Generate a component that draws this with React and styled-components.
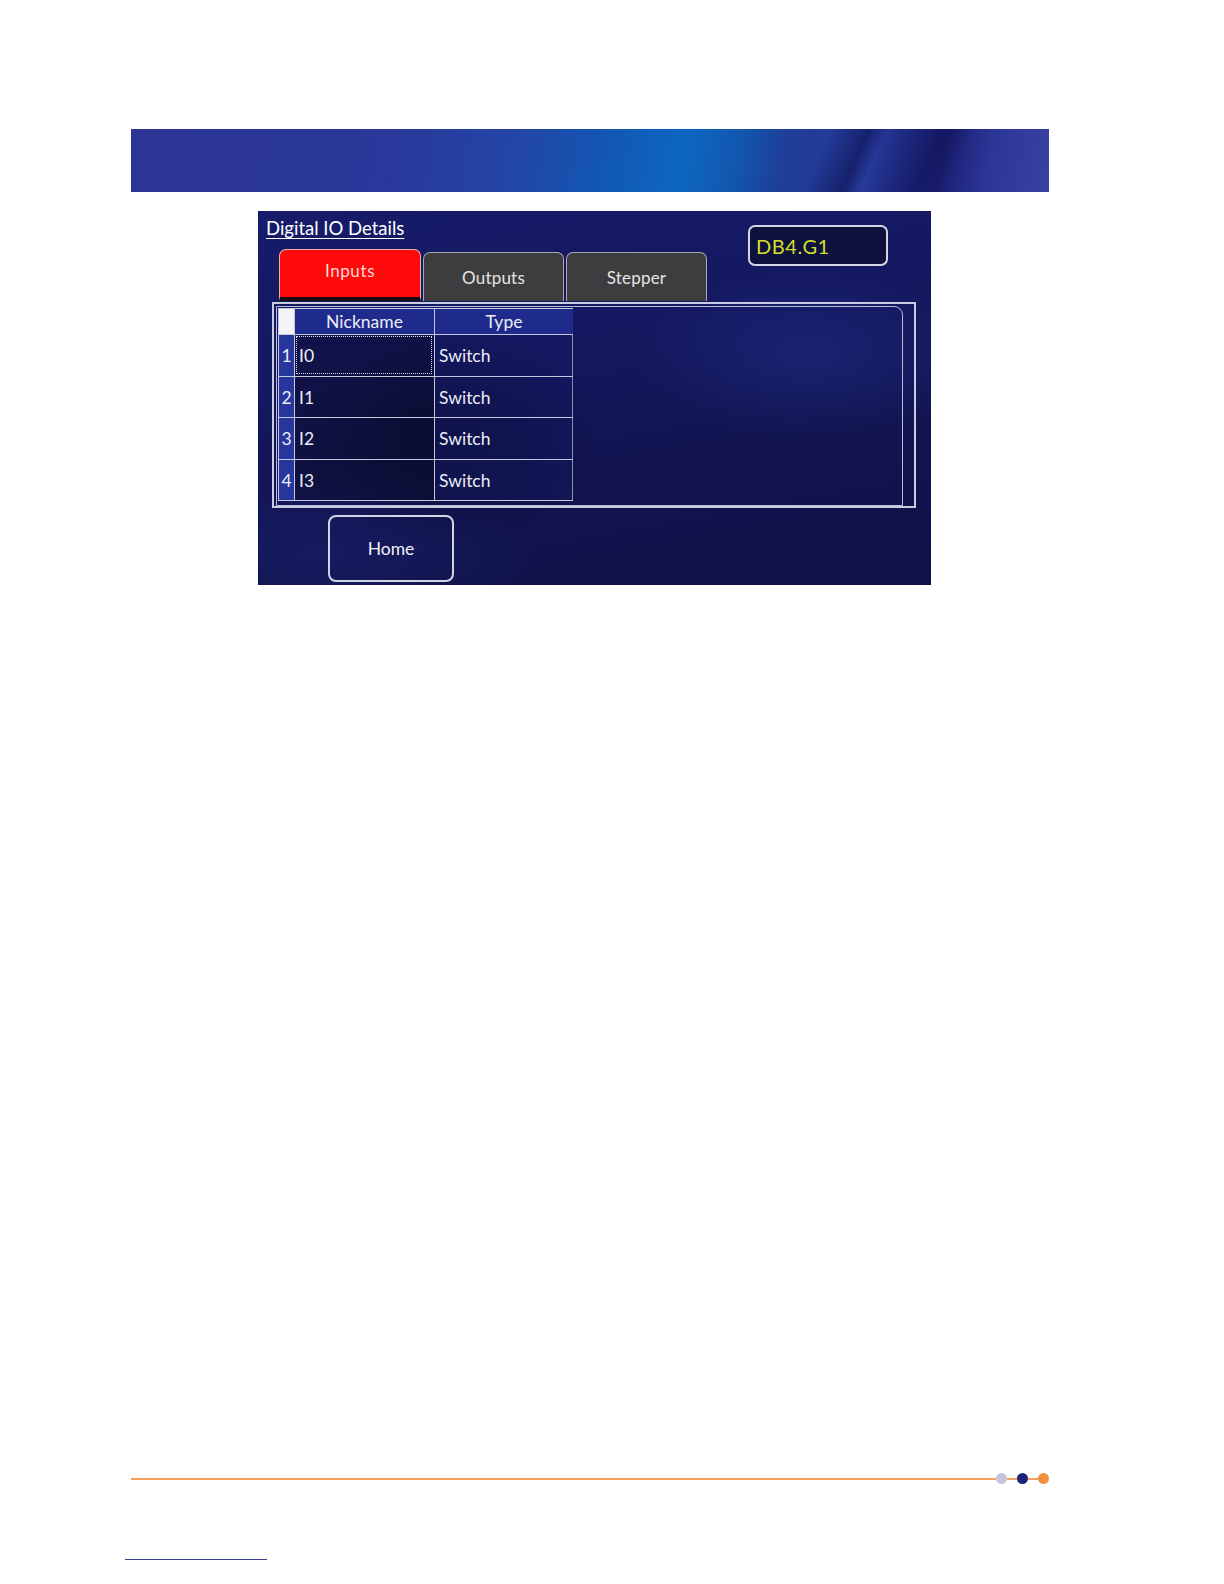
import React from "react"
import styled, { createGlobalStyle } from "styled-components"

const GlobalStyle = createGlobalStyle`
  body {
    margin: 0;
    background: #ffffff;
    font-family: "Lato", "Open Sans", sans-serif;
  }
`

const Page = styled.div`
  width: 1224px;
  min-height: 1584px;
  display: flex;
  flex-direction: column;
  background: #ffffff;
`

const Banner = styled.div`
  margin: 129px 0 0 131px;
  width: 918px;
  height: 63px;
  background:
    linear-gradient(115deg, transparent 74%, rgba(10, 12, 70, 0.55) 78%, transparent 80%, rgba(10, 12, 70, 0.4) 86%, transparent 89%),
    linear-gradient(100deg, #2c3494 0%, #29389a 28%, #2346a6 42%, #1158b4 52%, #0d67c0 60%, #1356ae 66%, #1f3d97 71%, #263a9b 80%, #1a1e70 88%, #2c3697 93%, #3942a2 100%);
`

const Panel = styled.div`
  margin: 19px 0 0 258px;
  width: 673px;
  height: 374px;
  display: flex;
  flex-direction: column;
  background:
    radial-gradient(ellipse 260px 120px at 82% 38%, rgba(40, 60, 160, 0.35), transparent 70%),
    radial-gradient(ellipse 220px 160px at 28% 60%, rgba(5, 5, 25, 0.45), transparent 70%),
    radial-gradient(ellipse 300px 120px at 10% 92%, rgba(30, 40, 130, 0.35), transparent 70%),
    linear-gradient(170deg, #171c6a 0%, #141860 35%, #11144e 70%, #0f1246 100%);
`

const HeaderRow = styled.div`
  display: flex;
  height: 90px;
`

const HeaderLeft = styled.div`
  display: flex;
  flex-direction: column;
`

const Title = styled.div`
  margin: 5px 0 0 8px;
  color: #ffffff;
  font-size: 18.5px;
  line-height: 25px;
  text-decoration: underline;
  text-underline-offset: 3px;
`

const Tabs = styled.div`
  display: flex;
  align-items: flex-end;
  gap: 2px;
  margin: auto 0 0 21px;
`

const Tab = styled.div`
  box-sizing: border-box;
  width: ${p => (p.$active ? 142 : 141)}px;
  height: ${p => (p.$active ? 52 : 49)}px;
  display: flex;
  align-items: center;
  justify-content: center;
  padding-bottom: ${p => (p.$active ? 6 : 0)}px;
  border: 1.5px solid ${p => (p.$active ? "#e8b0b0" : "#a8a8ae")};
  border-bottom: ${p => (p.$active ? "4px solid #1a0c14" : "none")};
  border-radius: 7px 7px 0 0;
  background: ${p => (p.$active ? "#ff0a0a" : "#3d3d3f")};
  color: ${p => (p.$active ? "#ffd8d8" : "#e4e4e4")};
  font-size: 17px;
  letter-spacing: ${p => (p.$active ? 0.6 : 0.2)}px;
`

const DbBox = styled.div`
  box-sizing: border-box;
  margin: 14px 43px 0 auto;
  width: 140px;
  height: 41px;
  padding-left: 6px;
  display: flex;
  align-items: center;
  border: 2px solid #d4d6e6;
  border-radius: 7px;
  background: #0e113c;
  color: #d4df2c;
  font-size: 20px;
  letter-spacing: 0.6px;
`

const TableFrame = styled.div`
  box-sizing: border-box;
  margin: 1px 15px 0 14px;
  height: 206px;
  padding: 2px 11px 0 2px;
  border: 2px solid #c9cce0;
`

const InnerFrame = styled.div`
  box-sizing: border-box;
  height: 100%;
  padding: 1px 0 0 1px;
  border: 1.5px solid #b8bcd6;
  border-radius: 0 9px 0 0;
`

const Grid = styled.div`
  display: grid;
  grid-template-columns: 16px 140px 139px;
  grid-template-rows: 26px 42px 41px 42px 41px;
  width: 295px;
  border-right: 1.5px solid #c6c9dd;
  border-bottom: 1.5px solid #c6c9dd;
  box-sizing: border-box;
`

const Cell = styled.div`
  box-sizing: border-box;
  display: flex;
  align-items: center;
  justify-content: ${p => (p.$center ? "center" : "flex-start")};
  padding-left: ${p => (p.$center ? 0 : 4)}px;
  border-left: 1.5px solid #c6c9dd;
  border-top: 1.5px solid #c6c9dd;
  background: ${p => p.$bg || "transparent"};
  color: #ecedf6;
  font-size: 17.5px;
  outline: ${p => (p.$focus ? "1px dotted #d8d8e8" : "none")};
  outline-offset: -3px;
`

const HomeButton = styled.div`
  box-sizing: border-box;
  margin: 7px 0 0 70px;
  width: 126px;
  height: 67px;
  display: flex;
  align-items: center;
  justify-content: center;
  border: 2px solid #d2d4e4;
  border-radius: 8px;
  color: #f0f0f6;
  font-size: 17.5px;
`

const Footer = styled.div`
  display: flex;
  align-items: center;
  margin: 888px 0 0 131px;
  width: 918px;
  height: 11px;
`

const Line = styled.div`
  flex: ${p => (p.$grow ? 1 : "none")};
  width: ${p => (p.$grow ? "auto" : "10px")};
  height: 2px;
  background: #f2a060;
`

const Dot = styled.div`
  width: 11px;
  height: 11px;
  border-radius: 50%;
  background: ${p => p.$color};
`

const LinkLine = styled.div`
  margin: 75px 0 0 125px;
  width: 142px;
  height: 1px;
  background: #3a4490;
`

const rows = [
  ["1", "I0"],
  ["2", "I1"],
  ["3", "I2"],
  ["4", "I3"],
]

export default function App() {
  return (
    <>
      <GlobalStyle />
      <Page>
        <Banner />
        <Panel>
          <HeaderRow>
            <HeaderLeft>
              <Title>Digital IO Details</Title>
              <Tabs>
                <Tab $active>Inputs</Tab>
                <Tab>Outputs</Tab>
                <Tab>Stepper</Tab>
              </Tabs>
            </HeaderLeft>
            <DbBox>DB4.G1</DbBox>
          </HeaderRow>
          <TableFrame>
            <InnerFrame>
              <Grid>
                <Cell $bg="#f4f4f8" />
                <Cell $center $bg="#1e2a8c">Nickname</Cell>
                <Cell $center $bg="#1e2a8c">Type</Cell>
                {rows.map(([num, name], i) => (
                  <React.Fragment key={num}>
                    <Cell $center $bg="#26369c">{num}</Cell>
                    <Cell $focus={i === 0} $bg="rgba(8, 8, 30, 0.35)">{name}</Cell>
                    <Cell $bg="rgba(20, 26, 100, 0.35)">Switch</Cell>
                  </React.Fragment>
                ))}
              </Grid>
            </InnerFrame>
          </TableFrame>
          <HomeButton>Home</HomeButton>
        </Panel>
        <Footer>
          <Line $grow />
          <Dot $color="#c3c6de" />
          <Line />
          <Dot $color="#1c2378" />
          <Line />
          <Dot $color="#f29040" />
        </Footer>
        <LinkLine />
      </Page>
    </>
  )
}
